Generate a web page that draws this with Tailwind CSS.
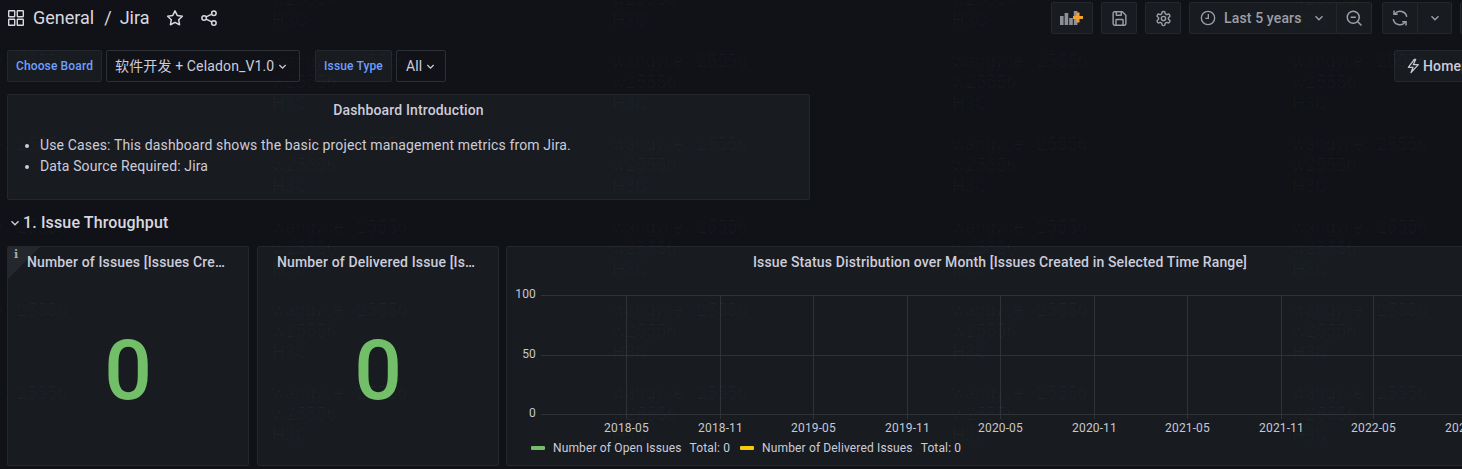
<!DOCTYPE html>
<html lang="en">
  <head>
    <meta charset="UTF-8" />
    <title>Jira - Dashboards</title>
    <script src="https://cdn.jsdelivr.net/npm/@tailwindcss/browser@4"></script>
  </head>
  <body class="relative h-[469px] overflow-hidden bg-[#111217] font-['Roboto','Noto_Sans_CJK_SC',sans-serif] text-[14px] tracking-[0.14px] text-[#ccccdc]">
    <!-- Toolbar -->
    <header class="flex h-[36px] items-start pt-[2px]">
      <div class="flex h-[32px] items-center pl-[7px] text-[#d8d9e0]">
        <svg class="h-[18px] w-[18px]" viewBox="0 0 18 18" fill="none" stroke="currentColor" stroke-width="1.4">
          <rect x="1.7" y="1.7" width="6" height="6" rx="0.4" />
          <rect x="10.3" y="1.7" width="6" height="6" rx="0.4" />
          <rect x="1.7" y="10.3" width="6" height="6" rx="0.4" />
          <rect x="10.3" y="10.3" width="6" height="6" rx="0.4" />
        </svg>
        <span class="ml-[8px] text-[18px] leading-[24px] tracking-normal">General</span>
        <span class="ml-[10px] text-[18px] leading-[24px] tracking-normal">/</span>
        <span class="ml-[8px] text-[18px] leading-[24px] tracking-normal">Jira</span>
        <svg class="ml-[16px] h-[18px] w-[18px]" viewBox="0 0 24 24" fill="none" stroke="currentColor" stroke-width="2" stroke-linejoin="round">
          <polygon points="12 2.5 15 8.6 21.8 9.6 16.9 14.3 18.1 21 12 17.8 5.9 21 7.1 14.3 2.2 9.6 9 8.6" />
        </svg>
        <svg class="ml-[16px] h-[18px] w-[18px]" viewBox="0 0 24 24" fill="none" stroke="currentColor" stroke-width="2">
          <circle cx="18.5" cy="5.5" r="3" />
          <circle cx="5.5" cy="12" r="3" />
          <circle cx="18.5" cy="18.5" r="3" />
          <line x1="8.2" y1="13.4" x2="15.8" y2="17.1" />
          <line x1="15.8" y1="6.9" x2="8.2" y2="10.6" />
        </svg>
      </div>
      <div class="ml-auto mr-[-38px] flex h-[32px] items-stretch text-[#9d9ea8]">
        <button class="flex w-[42px] items-center justify-center rounded-[2px] border border-[#24272c] bg-[#181b1f]">
          <svg class="h-[20px] w-[26px]" viewBox="0 0 26 20">
            <rect x="1" y="8" width="3.6" height="9" fill="#8e8f99" />
            <rect x="5.6" y="5" width="3.6" height="12" fill="#8e8f99" />
            <rect x="10.2" y="10" width="3.6" height="7" fill="#8e8f99" />
            <rect x="14.8" y="3" width="3.6" height="14" fill="#8e8f99" />
            <path d="M17.5 4.5h3v3.5H24v3h-3.500v3.500h-3V11H14V8h3.500z" fill="#f2a12e" />
          </svg>
        </button>
        <button class="ml-[8px] flex w-[36px] items-center justify-center rounded-[2px] border border-[#24272c] bg-[#181b1f]">
          <svg class="h-[17px] w-[17px]" viewBox="0 0 24 24" fill="none" stroke="currentColor" stroke-width="2" stroke-linejoin="round">
            <path d="M19 21.500H5a2 2 0 0 1-2-2V4.500a2 2 0 0 1 2-2h11l5 5v12a2 2 0 0 1-2 2z" />
            <path d="M17 21.500v-7a1 1 0 0 0-1-1H8a1 1 0 0 0-1 1v7" />
            <path d="M7.500 2.500v5h7v-5" />
          </svg>
        </button>
        <button class="ml-[8px] flex w-[36px] items-center justify-center rounded-[2px] border border-[#24272c] bg-[#181b1f]">
          <svg class="h-[17px] w-[17px]" viewBox="0 0 24 24" fill="none" stroke="currentColor" stroke-width="2">
            <path d="M12.220 2h-.44a2 2 0 0 0-2 2v.18a2 2 0 0 1-1 1.730l-.43.25a2 2 0 0 1-2 0l-.15-.08a2 2 0 0 0-2.730.73l-.22.38a2 2 0 0 0 .73 2.730l.15.1a2 2 0 0 1 1 1.720v.51a2 2 0 0 1-1 1.740l-.15.09a2 2 0 0 0-.73 2.730l.22.38a2 2 0 0 0 2.730.73l.15-.08a2 2 0 0 1 2 0l.43.25a2 2 0 0 1 1 1.730V20a2 2 0 0 0 2 2h.44a2 2 0 0 0 2-2v-.18a2 2 0 0 1 1-1.730l.43-.25a2 2 0 0 1 2 0l.15.08a2 2 0 0 0 2.730-.73l.22-.39a2 2 0 0 0-.73-2.730l-.15-.08a2 2 0 0 1-1-1.740v-.5a2 2 0 0 1 1-1.740l.15-.09a2 2 0 0 0 .73-2.730l-.22-.38a2 2 0 0 0-2.730-.73l-.15.08a2 2 0 0 1-2 0l-.43-.25a2 2 0 0 1-1-1.730V4a2 2 0 0 0-2-2z" />
            <circle cx="12" cy="12" r="3" />
          </svg>
        </button>
        <button class="ml-[8px] flex w-[148px] items-center rounded-l-[2px] border border-[#24272c] bg-[#181b1f] pl-[10px]">
          <svg class="h-[16px] w-[16px]" viewBox="0 0 24 24" fill="none" stroke="currentColor" stroke-width="2">
            <circle cx="12" cy="12" r="10" />
            <path d="M12.500 6v6.500H8" />
          </svg>
          <span class="ml-[8px] font-medium">Last 5 years</span>
          <svg class="ml-[12px] h-[10px] w-[10px]" viewBox="0 0 10 10" fill="none" stroke="currentColor" stroke-width="1.400"><path d="M1.500 3.300 5 6.800 8.500 3.300" /></svg>
        </button>
        <button class="ml-[-1px] flex w-[36px] items-center justify-center rounded-r-[2px] border border-[#24272c] bg-[#181b1f]">
          <svg class="h-[18px] w-[18px]" viewBox="0 0 24 24" fill="none" stroke="currentColor" stroke-width="2">
            <circle cx="11" cy="11" r="8" />
            <path d="M7.500 11h7M17 17l5 5" />
          </svg>
        </button>
        <button class="ml-[10px] flex w-[36px] items-center justify-center rounded-l-[2px] border border-[#24272c] bg-[#181b1f]">
          <svg class="h-[18px] w-[18px]" viewBox="0 0 24 24" fill="none" stroke="currentColor" stroke-width="2">
            <path d="M21 10.500A9 9 0 0 0 5 6.500" />
            <path d="M4 2v5h5" />
            <path d="M3 13.500A9 9 0 0 0 19 17.500" />
            <path d="M20 22v-5h-5" />
          </svg>
        </button>
        <button class="flex w-[34px] items-center justify-center rounded-r-[2px] border border-[#24272c] border-l-0 bg-[#181b1f]">
          <svg class="h-[10px] w-[10px]" viewBox="0 0 10 10" fill="none" stroke="currentColor" stroke-width="1.400"><path d="M1.500 3.300 5 6.800 8.500 3.300" /></svg>
        </button>
        <button class="ml-[8px] w-[40px] rounded-[2px] border border-[#24272c] bg-[#181b1f]"></button>
      </div>
    </header>

    <!-- Variables -->
    <div class="mt-[14px] flex h-[32px] items-stretch pl-[7px]">
      <label class="flex w-[95px] items-center justify-center rounded-[2px] border border-[#24272c] bg-[#181b1f] text-[12px] font-medium text-[#6e9fff]">Choose Board</label>
      <button class="ml-[4px] flex w-[194px] items-center rounded-[2px] border border-[#2c2f34] bg-[#111217] pl-[8px]">
        <span>软件开发 + Celadon_V1.0</span>
        <svg class="ml-[4px] h-[9px] w-[9px]" viewBox="0 0 10 10" fill="none" stroke="currentColor" stroke-width="1.400"><path d="M1.500 3.300 5 6.800 8.500 3.300" /></svg>
      </button>
      <label class="ml-[15px] flex w-[77px] items-center justify-center rounded-[2px] border border-[#24272c] bg-[#181b1f] text-[12px] font-medium text-[#6e9fff]">Issue Type</label>
      <button class="ml-[4px] flex w-[50px] items-center rounded-[2px] border border-[#2c2f34] bg-[#111217] pl-[9px]">
        <span>All</span>
        <svg class="ml-[4px] h-[9px] w-[9px]" viewBox="0 0 10 10" fill="none" stroke="currentColor" stroke-width="1.400"><path d="M1.500 3.300 5 6.800 8.500 3.300" /></svg>
      </button>
      <a class="ml-auto mr-[-60px] flex w-[128px] items-center rounded-[2px] border border-[#24272c] bg-[#181b1f] pl-[10px] font-medium">
        <svg class="h-[16px] w-[16px] text-[#c4c5cf]" viewBox="0 0 24 24" fill="none" stroke="currentColor" stroke-width="2" stroke-linejoin="round">
          <polygon points="14 2 5 14 12 14 9 22 20 10 12.500 10 16 2" />
        </svg>
        <span class="ml-[2px]">Homepage</span>
      </a>
    </div>

    <!-- Introduction panel -->
    <section class="ml-[7px] mt-[12px] h-[106px] w-[803px] rounded-[2px] border border-[#24272c] bg-[#181b1f]">
      <h2 class="flex h-[30px] items-center justify-center font-medium">Dashboard Introduction</h2>
      <ul class="mt-[10px] list-disc pl-[32px] leading-[21px]">
        <li>Use Cases: This dashboard shows the basic project management metrics from Jira.</li>
        <li>Data Source Required: Jira</li>
      </ul>
    </section>

    <!-- Row -->
    <div class="flex h-[46px] items-center pl-[10px]">
      <svg class="h-[10px] w-[10px]" viewBox="0 0 10 10" fill="none" stroke="currentColor" stroke-width="1.400"><path d="M1.500 3.300 5 6.800 8.500 3.300" /></svg>
      <h3 class="ml-[3px] text-[16px] font-medium text-[#d8d9e0]">1. Issue Throughput</h3>
    </div>

    <!-- Panels -->
    <div class="flex h-[220px] gap-[8px] pl-[7px]">
      <section class="relative flex w-[242px] shrink-0 flex-col rounded-[2px] border border-[#24272c] bg-[#181b1f]">
        <div class="absolute left-0 top-0 h-[32px] w-[32px] bg-[#24272c] [clip-path:polygon(0_0,100%_0,0_100%)]"></div>
        <span class="absolute left-[6px] top-[1px] font-['DejaVu_Serif',serif] text-[11px] font-bold leading-[14px] text-[#a9aab4]">i</span>
        <h2 class="relative h-[30px] truncate px-[19px] leading-[30px] font-medium">Number of Issues [Issues Created in Selected Time Range]</h2>
        <div class="flex flex-1 items-center justify-center text-[84px] leading-none font-medium tracking-normal text-[#73bf69]">0</div>
      </section>
      <section class="flex w-[242px] shrink-0 flex-col rounded-[2px] border border-[#24272c] bg-[#181b1f]">
        <h2 class="h-[30px] truncate px-[19px] leading-[30px] font-medium">Number of Delivered Issue [Issues Created in Selected Time Range]</h2>
        <div class="flex flex-1 items-center justify-center text-[84px] leading-none font-medium tracking-normal text-[#73bf69]">0</div>
      </section>
      <section class="ml-[-1px] flex w-[988px] shrink-0 flex-col rounded-[2px] border border-[#24272c] bg-[#181b1f]">
        <h2 class="h-[30px] truncate text-center leading-[30px] font-medium">Issue Status Distribution over Month [Issues Created in Selected Time Range]</h2>
        <!-- viewBox follows page x minus 507, page y minus 277 -->
        <svg class="h-[160px] w-[986px] text-[12px]" viewBox="0 0 986 160" fill="#c7c8d2" stroke="none">
          <g stroke="#2f3237" stroke-width="1">
            <path d="M34 18.500H986M34 78.500H986M34 137.500H986" />
            <path d="M119.500 18V142M213.500 18V142M306.500 18V142M400.500 18V142M493.500 18V142M587.500 18V142M680.500 18V142M774.500 18V142M866.500 18V142M960.500 18V142" />
          </g>
          <g text-anchor="end">
            <text x="29" y="21">100</text>
            <text x="29" y="81">50</text>
            <text x="29" y="140">0</text>
          </g>
          <g text-anchor="middle">
            <text x="119.500" y="155">2018-05</text>
            <text x="213.500" y="155">2018-11</text>
            <text x="306.500" y="155">2019-05</text>
            <text x="400.500" y="155">2019-11</text>
            <text x="493.500" y="155">2020-05</text>
            <text x="587.500" y="155">2020-11</text>
            <text x="680.500" y="155">2021-05</text>
            <text x="774.500" y="155">2021-11</text>
            <text x="866.500" y="155">2022-05</text>
            <text x="960.500" y="155">2022-11</text>
          </g>
        </svg>
        <div class="ml-[24px] mt-[1px] flex h-[20px] items-center text-[12px]">
          <i class="h-[4px] w-[14px] rounded-[1px] bg-[#73bf69]"></i>
          <span class="ml-[8px]">Number of Open Issues</span>
          <span class="ml-[8px]">Total: 0</span>
          <i class="ml-[10px] h-[4px] w-[14px] rounded-[1px] bg-[#f2cc0c]"></i>
          <span class="ml-[8px]">Number of Delivered Issues</span>
          <span class="ml-[8px]">Total: 0</span>
        </div>
      </section>
    </div>

    <!-- Watermark -->
    <div id="watermark" class="pointer-events-none absolute left-[-68px] top-[-33px] grid auto-rows-[83px] grid-cols-[repeat(5,340px)] text-[18px] leading-[21px] tracking-normal text-white/[0.027]"></div>
    <script>
      const watermark = document.getElementById("watermark");
      for (let i = 0; i < 30; i++) {
        const cell = document.createElement("div");
        cell.setAttribute("class", "whitespace-pre");
        cell.textContent = "wangyue   25556\nw25556\nH3C";
        watermark.appendChild(cell);
      }
    </script>
  </body>
</html>
